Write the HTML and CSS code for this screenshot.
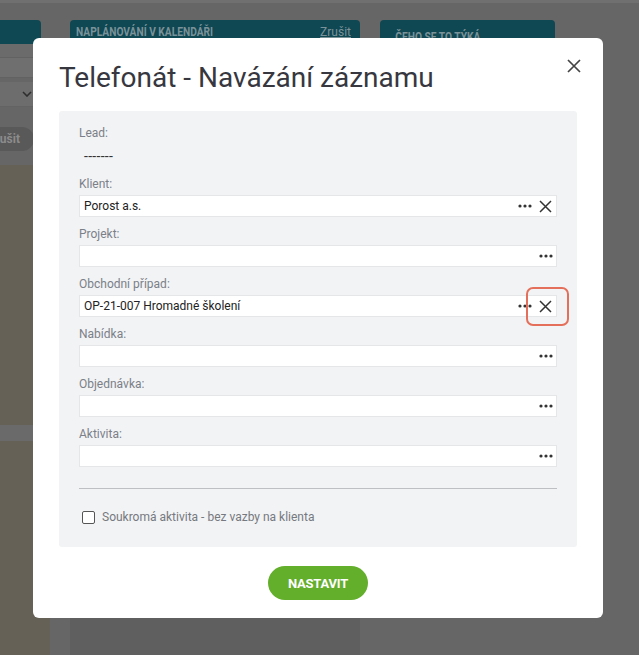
FILE: index.html
```html
<!DOCTYPE html>
<html lang="cs">
<head>
<meta charset="utf-8">
<title>Telefonát - Navázání záznamu</title>
<link rel="stylesheet" href="styles.css">
</head>
<body>
<div class="page">
  <div class="topstrip"></div>
  <div class="columns">
    <div class="col col-left">
      <div class="card-head"></div>
      <div class="left-body">
        <div class="lrow lrow-a"></div>
        <div class="lrow lrow-input"></div>
        <div class="lrow lrow-select"><svg width="10" height="6" viewBox="0 0 10 6"><path d="M1 1l4 4 4-4" fill="none" stroke="#2e2e2e" stroke-width="1.6"/></svg></div>
        <div class="lrow lrow-btn"><span class="lbtn">Zrušit</span></div>
        <div class="beige"><div class="band"></div></div>
      </div>
    </div>
    <div class="col col-mid">
      <div class="card-head"><span class="head-title">NAPLÁNOVÁNÍ V KALENDÁŘI</span><span class="head-link">Zrušit</span></div>
      <div class="mid-body"></div>
    </div>
    <div class="col col-right">
      <div class="card-head tall"><span class="head-title low">ČEHO SE TO TÝKÁ</span></div>
    </div>
  </div>
</div>

<div class="modal">
  <button class="close" aria-label="Zavřít"><svg width="14" height="14" viewBox="0 0 14 14"><path d="M1 1l12 12M13 1L1 13" stroke="#444" stroke-width="1.7"/></svg></button>
  <h1 class="title">Telefonát - Navázání záznamu</h1>
  <div class="panel">
    <div class="group">
      <div class="label">Lead:</div>
      <div class="value">-------</div>
    </div>
    <div class="group">
      <div class="label">Klient:</div>
      <div class="field"><span class="ftext">Porost a.s.</span>
        <span class="icon dots"><svg width="14" height="4" viewBox="0 0 14 4"><circle cx="2" cy="2" r="1.6"/><circle cx="7" cy="2" r="1.6"/><circle cx="12" cy="2" r="1.6"/></svg></span>
        <span class="icon clear"><svg width="13" height="13" viewBox="0 0 13 13"><path d="M1 1l11 11M12 1L1 12" stroke="#333" stroke-width="1.5"/></svg></span>
      </div>
    </div>
    <div class="group">
      <div class="label">Projekt:</div>
      <div class="field"><span class="ftext"></span>
        <span class="icon dots"><svg width="14" height="4" viewBox="0 0 14 4"><circle cx="2" cy="2" r="1.6"/><circle cx="7" cy="2" r="1.6"/><circle cx="12" cy="2" r="1.6"/></svg></span>
      </div>
    </div>
    <div class="group">
      <div class="label">Obchodní případ:</div>
      <div class="field"><span class="ftext">OP-21-007 Hromadné školení</span>
        <span class="icon dots"><svg width="14" height="4" viewBox="0 0 14 4"><circle cx="2" cy="2" r="1.6"/><circle cx="7" cy="2" r="1.6"/><circle cx="12" cy="2" r="1.6"/></svg></span>
        <span class="icon clear highlighted"><svg width="13" height="13" viewBox="0 0 13 13"><path d="M1 1l11 11M12 1L1 12" stroke="#333" stroke-width="1.5"/></svg></span>
      </div>
    </div>
    <div class="group">
      <div class="label">Nabídka:</div>
      <div class="field"><span class="ftext"></span>
        <span class="icon dots"><svg width="14" height="4" viewBox="0 0 14 4"><circle cx="2" cy="2" r="1.6"/><circle cx="7" cy="2" r="1.6"/><circle cx="12" cy="2" r="1.6"/></svg></span>
      </div>
    </div>
    <div class="group">
      <div class="label">Objednávka:</div>
      <div class="field"><span class="ftext"></span>
        <span class="icon dots"><svg width="14" height="4" viewBox="0 0 14 4"><circle cx="2" cy="2" r="1.6"/><circle cx="7" cy="2" r="1.6"/><circle cx="12" cy="2" r="1.6"/></svg></span>
      </div>
    </div>
    <div class="group">
      <div class="label">Aktivita:</div>
      <div class="field"><span class="ftext"></span>
        <span class="icon dots"><svg width="14" height="4" viewBox="0 0 14 4"><circle cx="2" cy="2" r="1.6"/><circle cx="7" cy="2" r="1.6"/><circle cx="12" cy="2" r="1.6"/></svg></span>
      </div>
    </div>
    <hr class="divider">
    <label class="check"><span class="box"></span><span class="check-text">Soukromá aktivita - bez vazby na klienta</span></label>
  </div>
  <div class="actions"><button class="primary">NASTAVIT</button></div>
</div>
</body>
</html>
```

FILE: styles.css
```css
* { box-sizing: border-box; }
html, body { margin: 0; padding: 0; }
body {
  width: 639px;
  height: 655px;
  overflow: hidden;
  background: #666666;
  font-family: Roboto, "Liberation Sans", sans-serif;
  position: relative;
}

/* dimmed background page */
.page { height: 655px; display: flex; flex-direction: column; }
.topstrip { height: 3px; background: #707070; }
.columns { display: flex; flex: 1; padding-top: 17px; }
.col { display: flex; flex-direction: column; }
.col-left { width: 41px; }
.col-mid { width: 290px; margin-left: 29px; }
.col-right { width: 175px; margin-left: 20px; }
.card-head {
  height: 24px;
  background: #0f4753;
  border-radius: 4px 4px 0 0;
  display: flex;
  align-items: center;
  justify-content: space-between;
  padding: 0 9px 0 6px;
  color: #7a9298;
}
.col-left .card-head { border-radius: 0 4px 0 0; }
.card-head.tall { height: 40px; align-items: flex-start; }
.head-title {
  font-size: 12px;
  font-weight: 700;
  letter-spacing: 0;
  transform: scaleX(0.85);
  transform-origin: left center;
  white-space: nowrap;
}
.head-title.low { padding-top: 10px; padding-left: 11px; }
.head-link { font-size: 12px; text-decoration: underline; }

.left-body { flex: 1; display: flex; flex-direction: column; width: 50px; }
.lrow { position: relative; }
.lrow-a { height: 13px; background: #6b6b6b; }
.lrow-input { height: 21px; background: #6f6f6f; border-top: 1px solid #626262; border-bottom: 1px solid #626262; }
.lrow-select { height: 25px; margin-top: 4px; background: #6d6d6d; border-bottom: 1px solid #636363; display: flex; align-items: center; justify-content: flex-end; padding-right: 18px; }
.lrow-btn { height: 58px; padding-top: 20px; background: #666; }
.lbtn {
  display: block;
  width: 34px;
  height: 24px;
  line-height: 24px;
  border-radius: 0 12px 12px 0;
  background: #595959;
  color: #8c8c8c;
  font-size: 12px;
  font-weight: 700;
  text-align: left;
  padding-right: 14px;
  overflow: hidden;
  white-space: nowrap;
  direction: rtl;
}
.beige { flex: 1; background: #656157; position: relative; display: flex; flex-direction: column; padding-top: 260px; }
.band { height: 16px; background: #6a6a6a; }
.mid-body { flex: 1; background: #5f5f5f; }

/* modal */
.modal {
  position: absolute;
  left: 33px;
  top: 38px;
  width: 570px;
  height: 580px;
  background: #ffffff;
  border-radius: 6px;
  padding: 25px 26px 0 26px;
}
.close {
  position: absolute;
  top: 20px;
  right: 21px;
  width: 16px;
  height: 16px;
  padding: 0;
  border: 0;
  background: transparent;
  display: flex;
  align-items: center;
  justify-content: center;
}
.title {
  margin: 0;
  font-size: 28px;
  font-weight: 400;
  line-height: 30px;
  color: #373740;
  height: 48px;
}
.panel {
  background: #f2f3f5;
  border-radius: 3px;
  height: 436px;
  padding: 15px 20px 0 20px;
}
.group { margin-bottom: 10px; }
.label {
  font-size: 12px;
  line-height: 14px;
  color: #7b8088;
  margin-bottom: 4px;
}
.value {
  font-size: 14px;
  line-height: 22px;
  height: 22px;
  color: #333;
  padding-left: 5px;
  margin-top: 5px;
  margin-bottom: 2px;
  letter-spacing: 0.3px;
}
.field {
  height: 22px;
  background: #fff;
  border: 1px solid #e5e6e8;
  display: flex;
  align-items: center;
  padding-left: 4px;
}
.ftext { flex: 1; font-size: 12px; color: #222; }
.icon { width: 21px; height: 20px; display: flex; align-items: center; justify-content: center; position: relative; }
.dots svg { fill: #333; }
.clear { width: 21px; }
.highlighted::after {
  content: "";
  position: absolute;
  left: -9px;
  top: -9px;
  width: 39px;
  height: 35px;
  border: 2px solid #e4705b;
  border-radius: 7px;
}
.divider {
  border: 0;
  border-top: 1px solid #bdbfc2;
  margin: 21px 0 0 0;
}
.check {
  display: flex;
  align-items: center;
  margin-top: 21px;
  margin-left: 3px;
}
.box {
  width: 13px;
  height: 13px;
  border: 1.5px solid #555;
  border-radius: 2px;
  background: #fff;
}
.check-text {
  margin-left: 7px;
  font-size: 12px;
  color: #76797f;
}
.actions { display: flex; justify-content: center; padding-top: 19px; }
.primary {
  width: 100px;
  height: 34px;
  border: 0;
  border-radius: 17px;
  background: #63ae2b;
  color: #fff;
  font-family: Roboto, "Liberation Sans", sans-serif;
  font-size: 13px;
  font-weight: 700;
  letter-spacing: -0.2px;
}
```
